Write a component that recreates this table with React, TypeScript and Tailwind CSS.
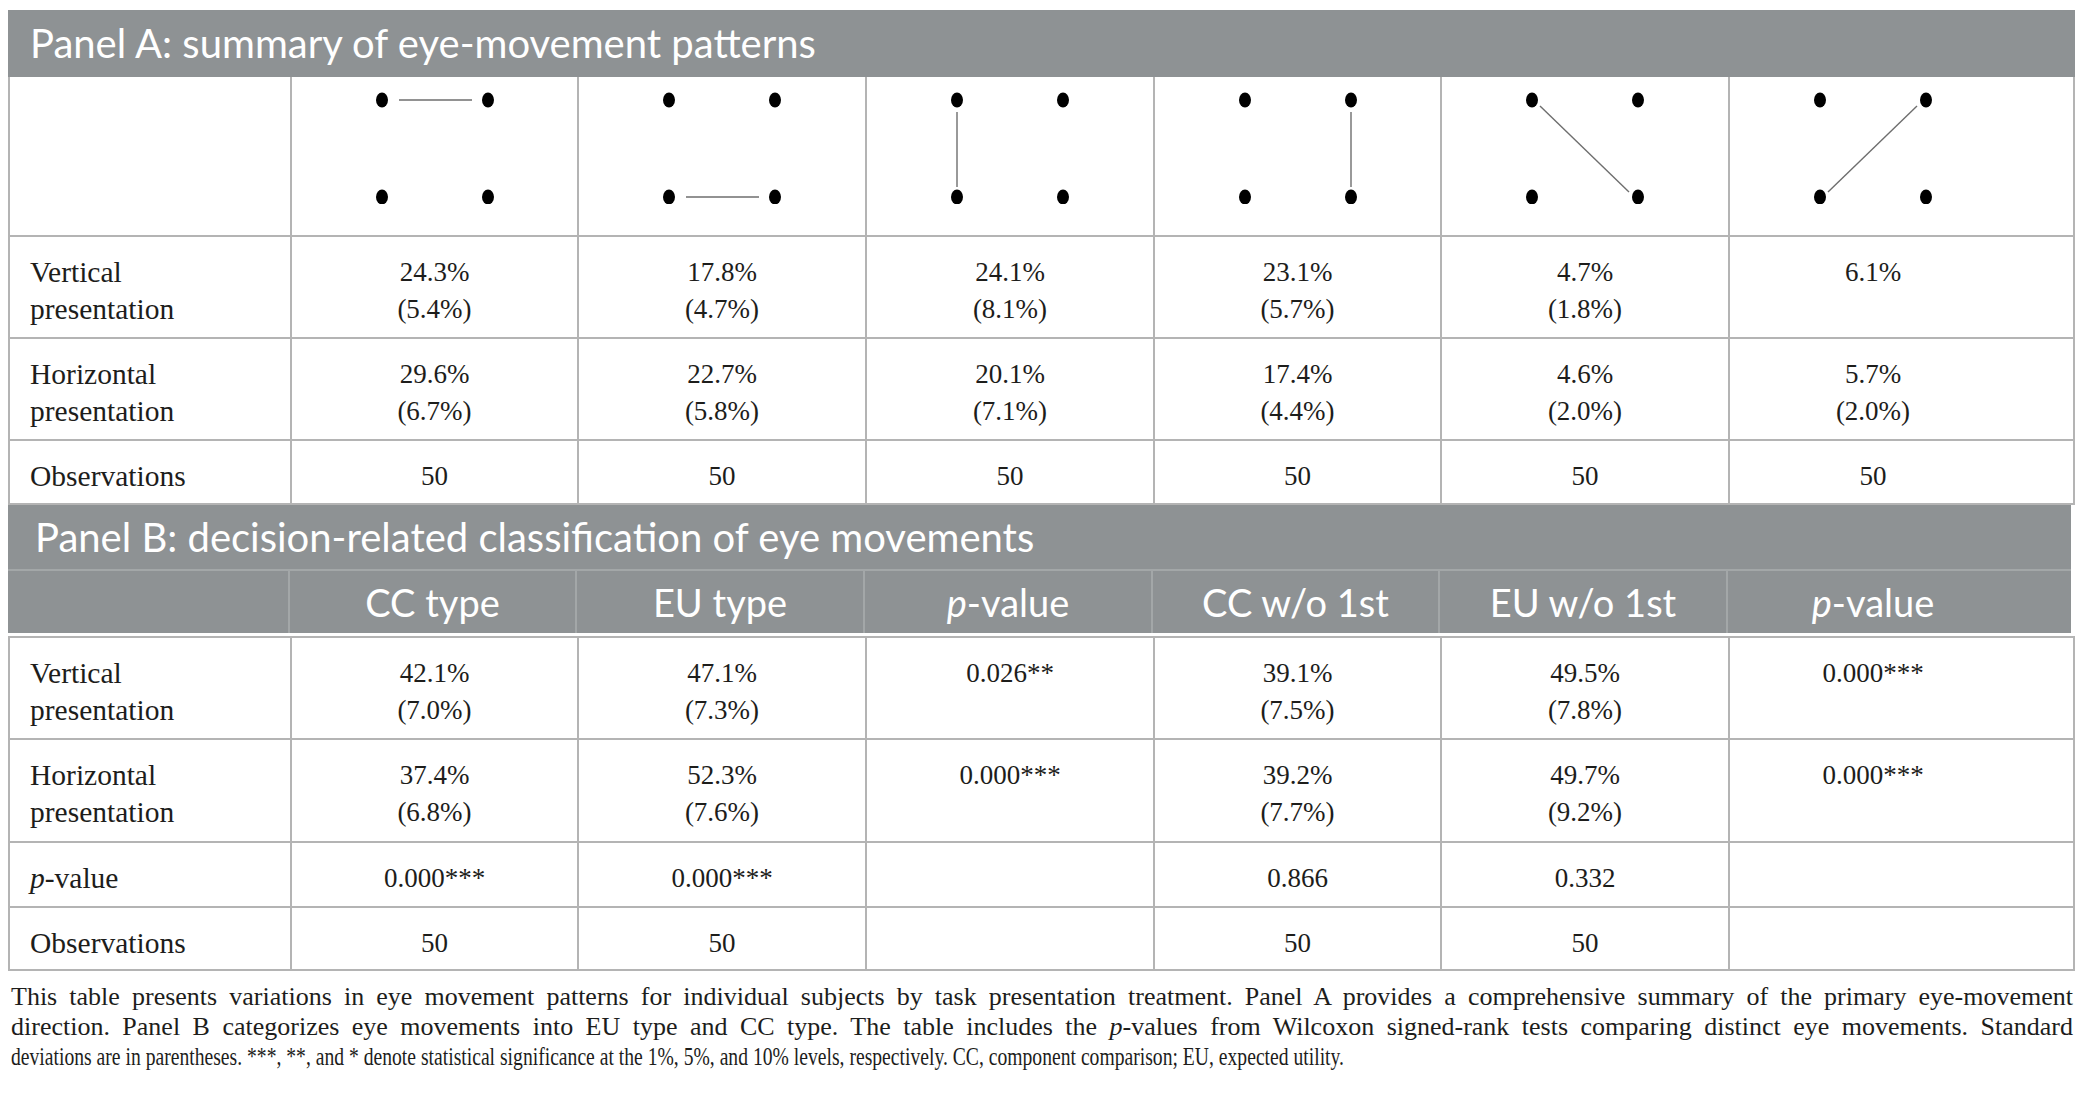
import React from "react";

type Cell = React.ReactNode;

const COLS = "grid grid-cols-[282px_287px_288px_288px_287px_288px_1fr]";
const LINE = "border-[#b4b4b4]";

function Dots({ kind }: { kind: string }) {
  return (
    <svg width="120" height="112" viewBox="0 0 120 112">
      {kind === "top" && <line x1="24" y1="8" x2="97" y2="8" stroke="#6e6e6e" strokeWidth="1.4" />}
      {kind === "bottom" && <line x1="24" y1="105" x2="97" y2="105" stroke="#6e6e6e" strokeWidth="1.4" />}
      {kind === "left" && <line x1="7" y1="20" x2="7" y2="95" stroke="#6e6e6e" strokeWidth="1.4" />}
      {kind === "right" && <line x1="113" y1="20" x2="113" y2="95" stroke="#6e6e6e" strokeWidth="1.4" />}
      {kind === "down" && <line x1="15" y1="14" x2="104" y2="100" stroke="#6e6e6e" strokeWidth="1.4" />}
      {kind === "up" && <line x1="15" y1="100" x2="104" y2="14" stroke="#6e6e6e" strokeWidth="1.4" />}
      <ellipse cx="7" cy="8" rx="6" ry="7.5" fill="#000" />
      <ellipse cx="113" cy="8" rx="6" ry="7.5" fill="#000" />
      <ellipse cx="7" cy="105" rx="6" ry="7.5" fill="#000" />
      <ellipse cx="113" cy="105" rx="6" ry="7.5" fill="#000" />
    </svg>
  );
}

function P() {
  return <span className="italic">p</span>;
}

// one body row: label + six cells, top aligned
function Row({ label, cells, h }: { label: Cell; cells: Cell[]; h: string }) {
  return (
    <div className={`${COLS} ${h}`}>
      <div className={`border-r-2 border-b-2 ${LINE} pl-[20px] pt-[17px] text-left text-[29.5px]`}>{label}</div>
      {cells.map((c, i) => (
        <div
          key={i}
          className={`border-b-2 ${LINE} pt-[17px] text-center ${i < 5 ? "border-r-2" : "pr-[57px]"}`}
        >
          {c}
        </div>
      ))}
    </div>
  );
}

function Two({ a, b }: { a: string; b?: string }) {
  return (
    <>
      <div>{a}</div>
      {b && <div>{b}</div>}
    </>
  );
}

const label2 = (w: string) => (
  <>
    <div>{w}</div>
    <div>presentation</div>
  </>
);

export default function App() {
  const diagrams = ["top", "bottom", "left", "right", "down", "up"];

  return (
    <div className="min-h-screen bg-white pt-[10px] font-['Liberation_Serif',serif] text-[27px] leading-[37px] text-[#1d1d1b]">
      {/* Panel A */}
      <div className="ml-[8px] w-[2067px]">
        <div className="h-[67px] bg-[#8e9294] flex items-center pl-[22px] font-['Lato',sans-serif] text-[40px] text-white">
          Panel A: summary of eye-movement patterns
        </div>
        <div className={`border-x-2 ${LINE}`}>
          <div className={`${COLS} h-[160px]`}>
            <div className={`border-r-2 border-b-2 ${LINE}`} />
            {diagrams.map((d, i) => (
              <div
                key={d}
                className={`border-b-2 ${LINE} pt-[15px] flex justify-center items-start ${i < 5 ? "border-r-2" : "pr-[57px]"}`}
              >
                <Dots kind={d} />
              </div>
            ))}
          </div>
          <Row
            h="h-[102px]"
            label={label2("Vertical")}
            cells={[
              <Two a="24.3%" b="(5.4%)" />,
              <Two a="17.8%" b="(4.7%)" />,
              <Two a="24.1%" b="(8.1%)" />,
              <Two a="23.1%" b="(5.7%)" />,
              <Two a="4.7%" b="(1.8%)" />,
              <Two a="6.1%" />,
            ]}
          />
          <Row
            h="h-[102px]"
            label={label2("Horizontal")}
            cells={[
              <Two a="29.6%" b="(6.7%)" />,
              <Two a="22.7%" b="(5.8%)" />,
              <Two a="20.1%" b="(7.1%)" />,
              <Two a="17.4%" b="(4.4%)" />,
              <Two a="4.6%" b="(2.0%)" />,
              <Two a="5.7%" b="(2.0%)" />,
            ]}
          />
          <Row h="h-[64px]" label="Observations" cells={["50", "50", "50", "50", "50", "50"]} />
        </div>
      </div>

      {/* Panel B */}
      <div className="ml-[8px] w-[2067px]">
        <div className="w-[2063px] bg-[#8e9294] font-['Lato',sans-serif] text-white">
          <div className="h-[66px] flex items-center pl-[27px] text-[40px] border-b-2 border-[#a3a7a8]">
            Panel B: decision-related classification of eye movements
          </div>
          <div className={`${COLS} h-[62px] text-[38px]`}>
            <div className="border-r-2 border-[#a3a7a8]" />
            <div className="border-r-2 border-[#a3a7a8] flex items-center justify-center">CC type</div>
            <div className="border-r-2 border-[#a3a7a8] flex items-center justify-center">EU type</div>
            <div className="border-r-2 border-[#a3a7a8] flex items-center justify-center">
              <span><P />-value</span>
            </div>
            <div className="border-r-2 border-[#a3a7a8] flex items-center justify-center">CC w/o 1st</div>
            <div className="border-r-2 border-[#a3a7a8] flex items-center justify-center">EU w/o 1st</div>
            <div className="flex items-center justify-center pr-[53px]">
              <span><P />-value</span>
            </div>
          </div>
        </div>
        <div className="h-[3px]" />
        <div className={`border-x-2 border-t-2 ${LINE}`}>
          <Row
            h="h-[102px]"
            label={label2("Vertical")}
            cells={[
              <Two a="42.1%" b="(7.0%)" />,
              <Two a="47.1%" b="(7.3%)" />,
              "0.026**",
              <Two a="39.1%" b="(7.5%)" />,
              <Two a="49.5%" b="(7.8%)" />,
              "0.000***",
            ]}
          />
          <Row
            h="h-[103px]"
            label={label2("Horizontal")}
            cells={[
              <Two a="37.4%" b="(6.8%)" />,
              <Two a="52.3%" b="(7.6%)" />,
              "0.000***",
              <Two a="39.2%" b="(7.7%)" />,
              <Two a="49.7%" b="(9.2%)" />,
              "0.000***",
            ]}
          />
          <Row
            h="h-[65px]"
            label={<span><P />-value</span>}
            cells={["0.000***", "0.000***", "", "0.866", "0.332", ""]}
          />
          <Row h="h-[63px]" label="Observations" cells={["50", "50", "", "50", "50", ""]} />
        </div>
      </div>

      {/* caption */}
      <div className="ml-[11px] w-[2062px] mt-[11px] text-[26px] leading-[30px]">
        <div className="whitespace-nowrap text-justify [text-align-last:justify]">
          This table presents variations in eye movement patterns for individual subjects by task presentation treatment. Panel A provides a comprehensive summary of the primary eye-movement
        </div>
        <div className="whitespace-nowrap text-justify [text-align-last:justify]">
          direction. Panel B categorizes eye movements into EU type and CC type. The table includes the <P />-values from Wilcoxon signed-rank tests comparing distinct eye movements. Standard
        </div>
        <div className="whitespace-nowrap w-max origin-left scale-x-[0.755]">
          deviations are in parentheses. ***, **, and * denote statistical significance at the 1%, 5%, and 10% levels, respectively. CC, component comparison; EU, expected utility.
        </div>
      </div>
    </div>
  );
}
